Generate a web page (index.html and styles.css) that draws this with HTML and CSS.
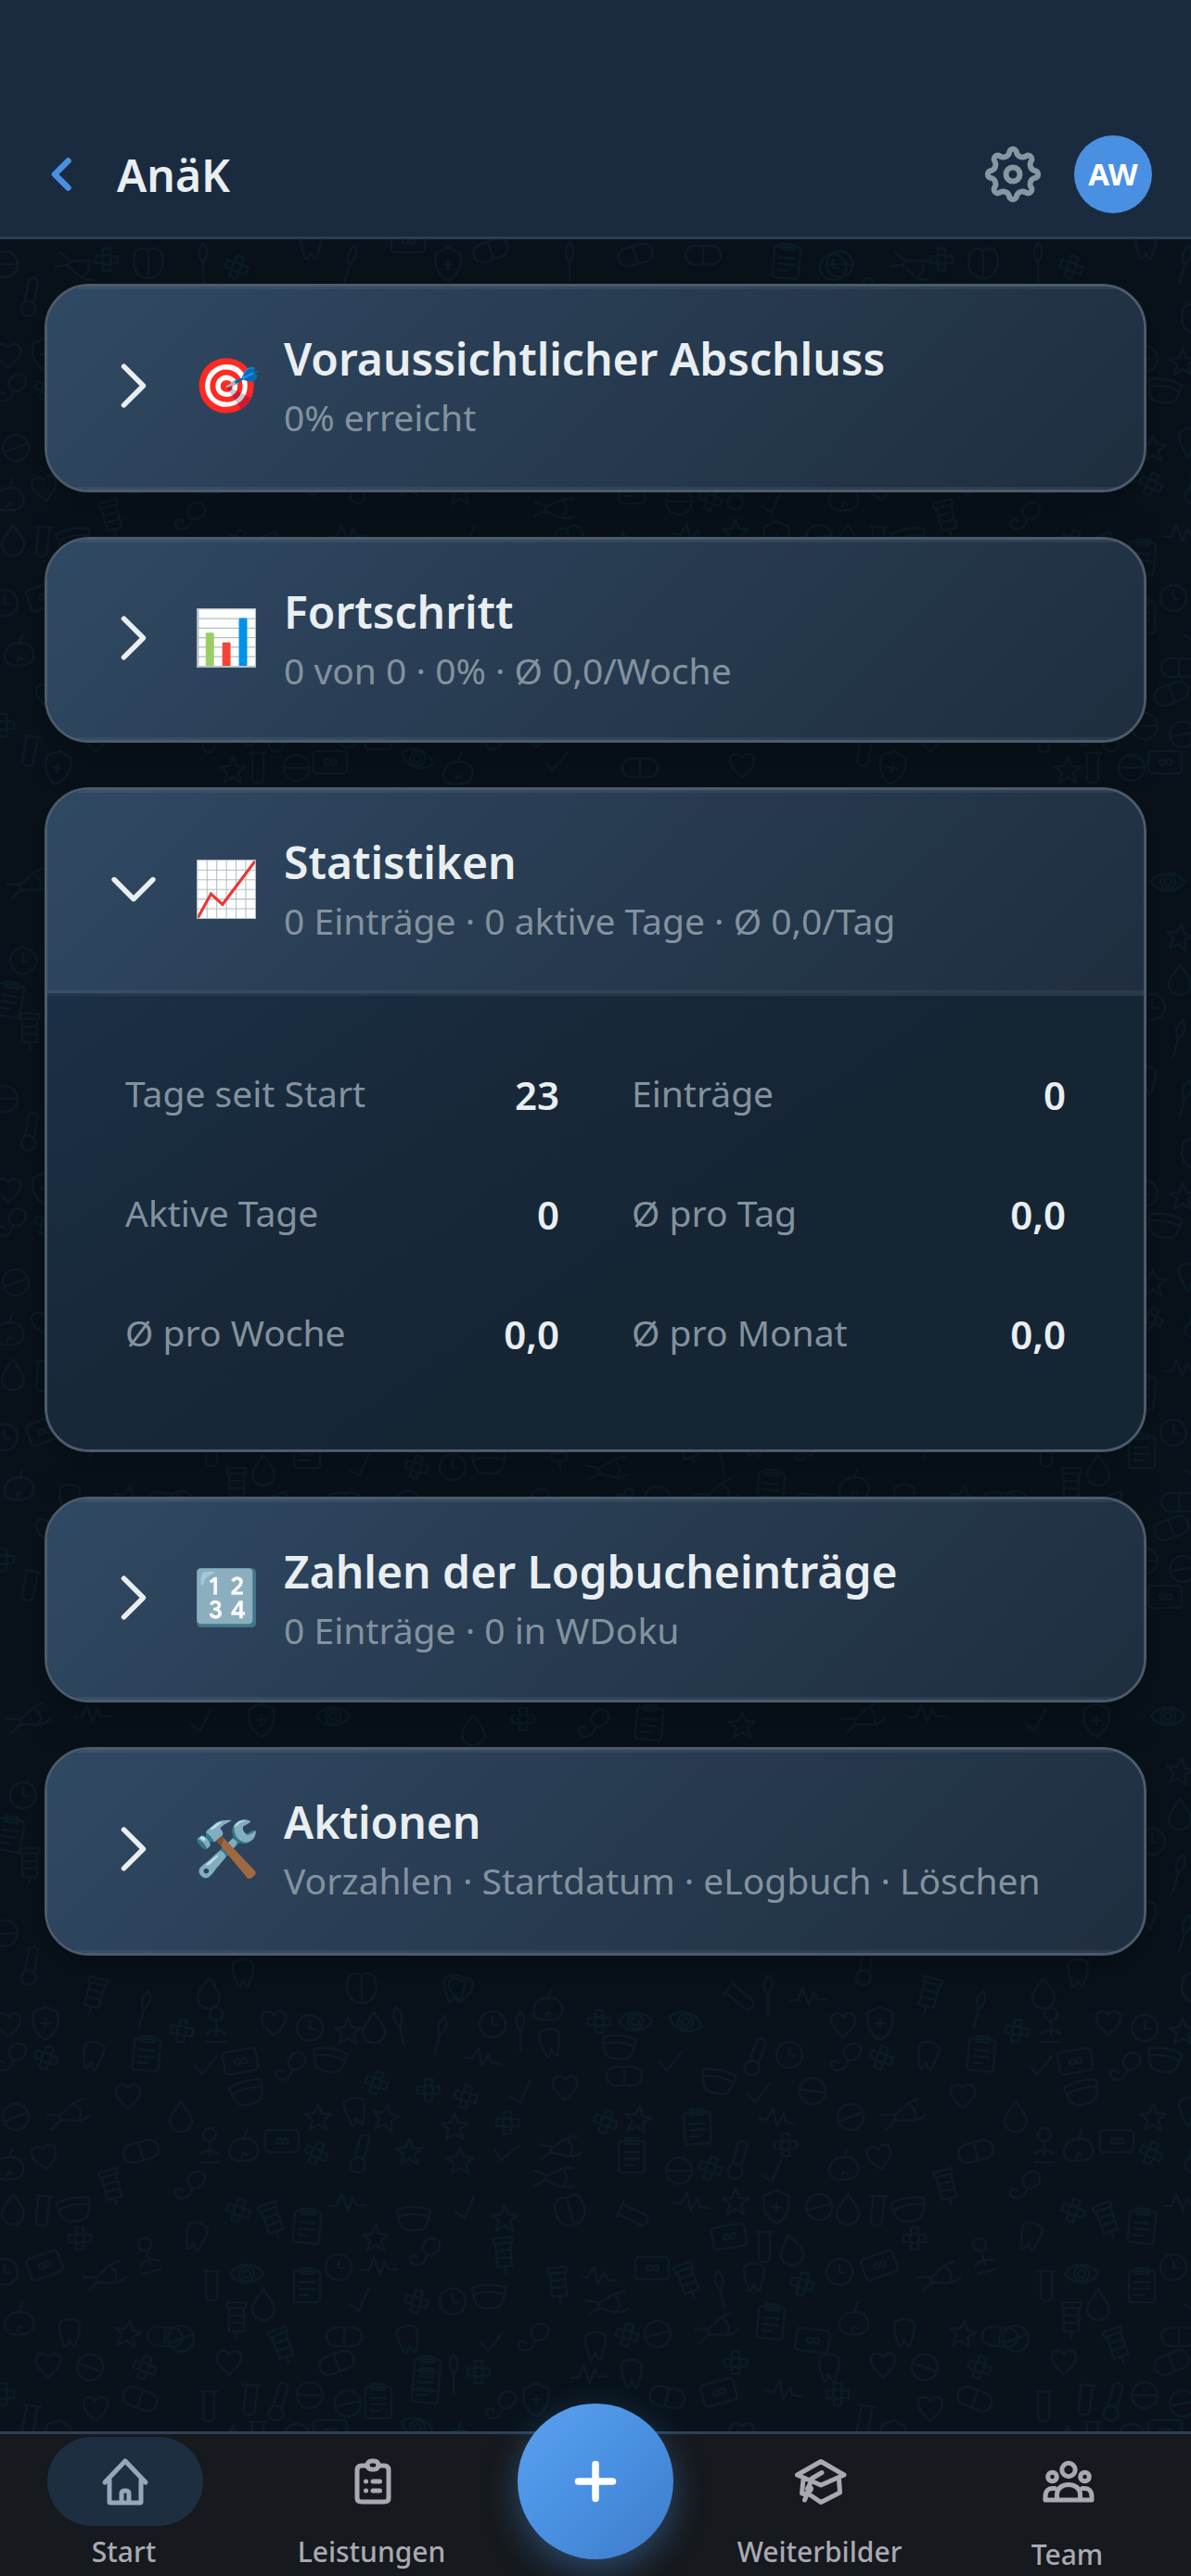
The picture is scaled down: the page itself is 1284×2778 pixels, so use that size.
FILE: index.html
```html
<!doctype html>
<html lang="de">

<head>
  <meta charset="UTF-8" />
  <meta name="viewport" content="width=device-width, initial-scale=1.0" />
  <title>AnäK</title>
  <link rel="stylesheet" href="styles.css">
</head>

<body>
  <div id="app" class="app">
    <svg class="backdrop" width="1284" height="2778" aria-hidden="true">
      <defs>
        <g id="heart"><path d="M0 14C-5 8-14 3-13-6c1-7 9-8 13-2 4-6 12-5 13 2 1 9-8 14-13 20z" /></g>
        <g id="shield"><path d="M0-18l13 6c2 12 0 22-13 30-13-8-15-18-13-30zM0-5V5M-5 0H5" /></g>
        <g id="drop"><path d="M0-16C6-7 12-1 12 5a12 12 0 0 1-24 0c0-6 6-12 12-21z" /></g>
        <g id="clock"><circle r="14" /><path d="M0-8V1H6" /></g>
        <g id="circle"><circle r="14" /><path d="M-13 0H13" /></g>
        <g id="star"><path d="M0-14l4 10 10 1-8 6 3 11-9-6-9 6 3-11-8-6 10-1z" /></g>
        <g id="scalpel"><path d="M0-21c7 9 4 15 1 20h-2c-4-6-5-11 1-20zM0 0v21" /></g>
        <g id="cross"><path d="M-4-12h8v8h8v8H4v8h-8V4h-8v-8h8z" /><circle r="5" /></g>
        <g id="tooth"><path d="M-10-12c6-4 14-4 20 0 3 8-2 18-4 26-3 2-4-3-6-7-2 4-3 9-6 7-2-8-7-18-4-26z" /></g>
        <g id="clip"><rect x="-14" y="-16" width="28" height="34" rx="3" /><path d="M-7-19H7v6H-7zM-8-4H8M-8 3H8M-8 10H2" /></g>
        <g id="kit"><rect x="-18" y="-12" width="36" height="24" rx="4" /><circle cx="-3" r="3" /><circle cx="4" r="3" /></g>
        <g id="mask"><path d="M-18-10c12-4 24-4 36 0-1 11-3 18-8 21-7 2-13 2-20 0-5-3-7-10-8-21zM-15-3c10-3 20-3 30 0" /></g>
        <g id="pill"><rect x="-19" y="-10" width="38" height="20" rx="10" /><path d="M0-10V10" /></g>
        <g id="syringe"><path d="M-10-17h20v6H-10zM-8-11V14H8V-11M-8-3H8M-8 5H8M0 14v8" /></g>
        <g id="tube"><path d="M-9-16H9M-6-16V11c0 7 12 7 12 0V-16" /></g>
        <g id="thermo"><path d="M-5 6V-16c0-6 10-6 10 0V6" /><circle cy="13" r="8" /></g>
        <g id="eye"><path d="M-18 0c9-13 27-13 36 0-9 13-27 13-36 0z" /><circle r="8" /><circle r="4" /></g>
        <g id="ecg"><path d="M-20 4h8l5-13 7 18 5-14 4 8h10" /></g>
        <g id="check"><path d="M-12 2l8 9L12-9" /></g>
        <g id="bone"><path d="M-24-8l14 5C0-7 6-12 18-11M-24 8l12-6C0 7 8 13 19 8M-10-3c-3 3-3 6-1 7M8-7c4 5 4 9 0 14" /></g>
        <g id="steth"><path d="M0-12c6-8 18-4 16 5-1 6-9 11-14 8-5-3-6-9-2-13zM2 1c0 12-16 16-18 6-1-5 7-6 8-2" /></g>
        <g id="scope"><circle cy="-15" r="7" /><path d="M0-8V8M-10 6c5-5 13-5 20 0M-10 15h20" /></g>
        <g id="stomach"><path d="M0-8c9-3 17 6 15 15-2 7-9 9-15 8-8 2-16-2-16-9 0-9 8-16 16-14zM0-8l3-10M-2 12c0-5 2-7 5-3" /></g>
        <g id="brain"><path d="M0-15c8-5 16 1 15 8 3 10-3 22-15 22s-18-12-15-22c-1-7 7-13 15-8zM0-15V15" /></g>
      </defs>
      <g id="doodles" class="doodles"></g>
    </svg>

    <header class="topbar">
      <svg class="back" viewBox="0 0 30 48"><path d="M23.500 9.500L9 24l14.500 14.500" /></svg>
      <h1 class="page-title">AnäK</h1>
      <svg class="gear" viewBox="-12 -12 24 24">
        <path d="M-1.350-7.700A1.350 1.350 0 0 1 1.350-7.700A2.300 2.300 0 0 0 4.490-6.400A1.350 1.350 0 0 1 6.400-4.490A2.300 2.300 0 0 0 7.700-1.350A1.350 1.350 0 0 1 7.700 1.350A2.300 2.300 0 0 0 6.400 4.490A1.350 1.350 0 0 1 4.490 6.400A2.300 2.300 0 0 0 1.350 7.700A1.350 1.350 0 0 1-1.350 7.700A2.300 2.300 0 0 0-4.490 6.400A1.350 1.350 0 0 1-6.400 4.490A2.300 2.300 0 0 0-7.700 1.350A1.350 1.350 0 0 1-7.700-1.350A2.300 2.300 0 0 0-6.400-4.490A1.350 1.350 0 0 1-4.490-6.400A2.300 2.300 0 0 0-1.350-7.700z" />
        <circle r="2.500" />
      </svg>
      <div class="avatar">AW</div>
    </header>

    <main class="content">
      <section class="card">
        <div class="card-header tall">
          <svg class="chevron" viewBox="0 0 24 24"><path d="M8.2 4.4l7.6 7.6-7.6 7.6" /></svg>
          <span class="emoji">🎯</span>
          <div class="card-text">
            <h2>Voraussichtlicher Abschluss</h2>
            <p>0% erreicht</p>
          </div>
        </div>
      </section>

      <section class="card">
        <div class="card-header">
          <svg class="chevron" viewBox="0 0 24 24"><path d="M8.2 4.4l7.6 7.6-7.6 7.6" /></svg>
          <span class="emoji">📊</span>
          <div class="card-text">
            <h2>Fortschritt</h2>
            <p>0 von 0 · 0% · Ø 0,0/Woche</p>
          </div>
        </div>
      </section>

      <section class="card">
        <div class="card-header open">
          <svg class="chevron" viewBox="0 0 24 24"><path d="M4.4 8.2l7.6 7.6 7.6-7.6" /></svg>
          <span class="emoji">📈</span>
          <div class="card-text">
            <h2>Statistiken</h2>
            <p>0 Einträge · 0 aktive Tage · Ø 0,0/Tag</p>
          </div>
        </div>
        <div class="stats">
          <div class="stat"><span>Tage seit Start</span><strong>23</strong></div>
          <div class="stat"><span>Einträge</span><strong>0</strong></div>
          <div class="stat"><span>Aktive Tage</span><strong>0</strong></div>
          <div class="stat"><span>Ø pro Tag</span><strong>0,0</strong></div>
          <div class="stat"><span>Ø pro Woche</span><strong>0,0</strong></div>
          <div class="stat"><span>Ø pro Monat</span><strong>0,0</strong></div>
        </div>
      </section>

      <section class="card">
        <div class="card-header">
          <svg class="chevron" viewBox="0 0 24 24"><path d="M8.2 4.4l7.6 7.6-7.6 7.6" /></svg>
          <span class="emoji">🔢</span>
          <div class="card-text">
            <h2>Zahlen der Logbucheinträge</h2>
            <p>0 Einträge · 0 in WDoku</p>
          </div>
        </div>
      </section>

      <section class="card">
        <div class="card-header tall">
          <svg class="chevron" viewBox="0 0 24 24"><path d="M8.2 4.4l7.6 7.6-7.6 7.6" /></svg>
          <span class="emoji">🛠️</span>
          <div class="card-text">
            <h2>Aktionen</h2>
            <p>Vorzahlen · Startdatum · eLogbuch · Löschen</p>
          </div>
        </div>
      </section>
    </main>

    <nav class="tabbar">
      <a class="tab active">
        <span class="tab-icon">
          <svg viewBox="0 0 60 60"><path d="M8 31L30 8l22 23M13 28v24q0 1 1 1h32q1 0 1-1V28M26 53V43q0-3 4-3t4 3v10" /></svg>
        </span>
        <span class="tab-label">Start</span>
      </a>
      <a class="tab">
        <span class="tab-icon">
          <svg viewBox="0 0 60 60"><path d="M24 13h-6q-5 0-5 5v30q0 4 5 4h24q5 0 5-4V18q0-5-5-5h-6" /><rect x="24" y="8" width="12" height="9" rx="4.5" /><path d="M22.500 30h.1M30 30h7.500M22.500 40h.1M30 40h7.500" /></svg>
        </span>
        <span class="tab-label">Leistungen</span>
      </a>
      <div class="tab">
        <div class="fab">
          <svg viewBox="0 0 60 60"><path d="M30 11.500v37M11.500 30h37" /></svg>
        </div>
      </div>
      <a class="tab">
        <span class="tab-icon">
          <svg viewBox="0 0 60 60"><path d="M30 8.500L55 23 30 34 4.500 23zM11 28l-1.500 15L14 44M49.500 28l1 14L30 52.500 19 45M31 20.500L20 27l-3.500 10M18 36l-3 8-2.500 6" /><circle cx="17.500" cy="38" r="2" /></svg>
        </span>
        <span class="tab-label">Weiterbilder</span>
      </a>
      <a class="tab team">
        <span class="tab-icon">
          <svg viewBox="0 0 60 60"><circle cx="30" cy="17.500" r="7.200" /><circle cx="12.500" cy="25" r="4.800" /><circle cx="47.500" cy="25" r="4.800" /><path d="M17.500 50V44c0-14 25-14 25 0v6M15 37.500q-10-1-10 9V50h50v-3.500q0-10-10-9" /></svg>
        </span>
        <span class="tab-label">Team</span>
      </a>
    </nav>
  </div>
  <script src="doodles.js"></script>
</body>

</html>
```
FILE: styles.css
```css
* {
  margin: 0;
  padding: 0;
  box-sizing: border-box;
}

body {
  background: #09121a;
  color: #e9eef1;
  font-family: "Noto Sans", "Open Sans", sans-serif;
}

svg {
  display: block;
  flex: none;
  fill: none;
  stroke: currentColor;
  stroke-linecap: round;
  stroke-linejoin: round;
}

.app {
  position: relative;
  display: flex;
  flex-direction: column;
  width: 1284px;
  height: 2778px;
  overflow: hidden;
}

.backdrop {
  position: absolute;
  top: 0;
  left: 0;
}

.doodles {
  stroke: #0c1b25;
  stroke-width: 2.6;
}

/* top bar */
.topbar {
  position: relative;
  display: flex;
  align-items: center;
  height: 258px;
  padding: 120px 42px 0 50px;
  background: #1a2b40;
  border-bottom: 3px solid #2c3e53;
}

.back {
  width: 30px;
  height: 48px;
  color: #4a90e2;
  stroke-width: 6.5;
}

.page-title {
  flex: 1;
  margin-left: 46px;
  padding-top: 2px;
  font-size: 48px;
  font-weight: 600;
  line-height: 60px;
}

.gear {
  width: 72px;
  height: 72px;
  margin-right: 30px;
  color: #8796a1;
  stroke-width: 2;
}

.avatar {
  width: 84px;
  height: 84px;
  border-radius: 50%;
  background: #4a90e2;
  color: #fff;
  font-size: 33px;
  font-weight: 700;
  line-height: 84px;
  text-align: center;
}

/* cards */
.content {
  position: relative;
  flex: 1;
  display: flex;
  flex-direction: column;
  gap: 48px;
  padding: 48px;
}

.card {
  border: 3px solid #4b5b6c;
  border-radius: 48px;
  overflow: hidden;
  background: #1a2a3b;
  box-shadow: 0 12px 48px rgba(0, 0, 0, 0.25);
}

.card-header {
  display: flex;
  align-items: center;
  height: 216px;
  padding: 0 48px 5px 60px;
  background: linear-gradient(135deg, #304963 0%, #283c52 45%, #1f2e3f 100%);
  box-shadow: inset 0 3px 0 rgba(255, 255, 255, 0.06), inset 0 -3px 0 rgba(255, 255, 255, 0.06);
}

.card-header.tall {
  height: 219px;
}

.card-header.open {
  height: 222px;
  border-bottom: 3px solid #26384b;
}

.chevron {
  width: 66px;
  height: 66px;
  stroke-width: 2;
}

.emoji {
  width: 84px;
  margin-left: 25px;
  font-family: "Noto Color Emoji", sans-serif;
  font-size: 58px;
  line-height: 66px;
  text-align: center;
  white-space: nowrap;
}

.card-text {
  align-self: flex-start;
  margin-left: 20px;
  padding-top: 48px;
}

.card-text h2 {
  font-size: 48px;
  font-weight: 600;
  line-height: 59px;
}

.card-text p {
  margin-top: 4px;
  color: #83929e;
  font-size: 39px;
  line-height: 60px;
}

.stats {
  display: grid;
  grid-template-columns: 1fr 1fr;
  gap: 6px;
  height: 489px;
  padding: 43px 48px 65px;
  background: linear-gradient(145deg, #1b2f46 0%, #182839 35%, #162534 60%);
}

.stat {
  display: flex;
  align-items: center;
  justify-content: space-between;
  padding: 0 36px;
}

.stat span {
  color: #83929e;
  font-size: 39px;
}

.stat strong {
  padding-top: 4px;
  font-size: 42px;
  font-weight: 600;
}

/* bottom navigation */
.tabbar {
  position: relative;
  display: grid;
  grid-template-columns: 267px 267px 216px 267px 267px;
  height: 156px;
  padding-top: 3px;
  background: #16191d;
  border-top: 3px solid #2f4056;
}

.tab {
  display: flex;
  flex-direction: column;
  align-items: center;
  color: #a9a9b4;
}

.tab-icon {
  display: flex;
  align-items: center;
  justify-content: center;
  width: 168px;
  height: 96px;
  margin-left: 3px;
  border-radius: 48px;
}

.active .tab-icon {
  background: #1d2e41;
  color: #98a6bd;
}

.tab-icon svg {
  width: 60px;
  height: 60px;
  stroke-width: 5;
}

.tab-label {
  margin-top: 8px;
  font-size: 30px;
  font-weight: 500;
  line-height: 40px;
}

.team .tab-label {
  margin-top: 11px;
}

.fab {
  flex: none;
  display: flex;
  align-items: center;
  justify-content: center;
  width: 168px;
  height: 168px;
  margin-top: -36px;
  border-radius: 50%;
  background: linear-gradient(135deg, #5ba1ef 0%, #4a90e2 50%, #3d7cc9 100%);
  box-shadow: 0 12px 36px rgba(74, 144, 226, 0.4);
  color: #fff;
}

.fab svg {
  width: 60px;
  height: 60px;
  stroke-width: 7.5;
}
```
FILE: doodles.js
```js
// one 900x900 tile of medical doodles: name x y rotation
const tile = `
shield 62 8 10;star 251 10;tube 278 8;circle 320 8;kit 356 2;eye 450 -2 20;stomach 494 10;check 600 0;pill 690 8;heart 800 5
check 217 135 -10;shield 282 135;eye 359 131;cross 564 134;drop 510 145;ecg 100 128;bone 33 133 -20;clip 700 138 5;star 800 140;steth 640 140
clock 25 216;clip 10 258 10;syringe 32 290;clock 342 266;drop 372 236;scalpel 370 300 15;star 372 190 10
circle 5 365;bone 85 368 20;cross 115 360;brain 160 365;scalpel 219 363;cross 255 368 20;scalpel 377 365 15;shield 483 365;pill 529 350 -20
scalpel 614 362;thermo 33 400 10;pill 685 355 -15;pill 758 355;clip 848 362 5;tooth 335 345;clock 898 368;kit 440 340
drop 225 429;heart 9 463;shield 49 462;syringe 102 430 15;scalpel 155 447 15;cross 196 470 10;scope 233 467;heart 295 461;clock 334 467;star 375 470
drop 403 466;scalpel 431 465 -12;scalpel 474 475 15;tooth 490 425;brain 390 425;tooth 262 408;steth 12 500;cross 50 499 20;tooth 100 497 12
clip 158 495 5;check 222 506;kit 259 503 -10;steth 313 510;mask 355 502 10;cross 406 526 20;cross 462 534;heart 138 540;mask 267 537 -15
circle 17 563 -20;bone 76 560 -20;star 343 563;tooth 383 557 -10;star 416 563 10;star 490 573;drop 195 562;kit 304 589;cross 341 602 25
scope 226 597;stomach 263 595;thermo 389 602 15;star 441 600;heart 48 606 -10;pill 152 600 -15;stomach 10 615;syringe 120 637 -15;steth 205 638
drop 14 662;tube 46 664 5;mask 80 663 -10;cross 257 664 20;syringe 293 673 -20;clip 331 681 5;ecg 375 655;mask 446 673;star 405 693
tooth 211 692 15;cross 86 694;steth 458 710;kit 48 723 -20;scope 160 715 -15;bone 115 735 -20;clock 5 730;eye 266 732;tube 228 745
clip 331 745;clock 365 725;ecg 410 724;cross 449 762 15;check 388 760 -15;drop 284 765;clock 488 762;stomach 21 782;syringe 255 780
tooth 75 796;star 138 796 10;pill 178 800 5;circle 195 802 -20;syringe 304 808 -20;pill 371 800;tooth 440 803 -10;heart 52 830;circle 97 833 20
cross 156 833 20;heart 247 827;pill 363 828 -20;clip 460 840 5;scalpel 489 840;heart 497 425;stomach 591 443;clock 531 463;scalpel 561 470
tooth 593 483 -10;ecg 521 499 12;cross 646 460;eye 685 460;eye 739 460 15;mask 667 488 5;pill 673 519;check 723 502;heart 609 531
check 562 536 -15;cross 502 541 15;cross 547 569;cross 653 568 20;star 688 565 10;tube 798 434 -50;scalpel 828 431;ecg 872 433;thermo 815 498 20
clock 851 496;mask 774 525 12;check 818 536;circle 876 535 8;clip 752 574 -3;ecg 839 564 10;cross 847 593;thermo 796 609 15;check 833 621 -15
circle 732 621;cross 766 618 20;clip 681 605;bone 606 597 -8;bone 600 629;check 546 600 12;star 496 610;check 502 660 -15;star 544 672
brain 615 665 -15;tube 683 669 -65;ecg 746 655 10;star 793 654;shield 837 660;circle 883 660 -15;kit 786 692 -10;tube 824 703;drop 853 706 -12
syringe 543 710 -5;kit 703 726;syringe 741 738 -20;scalpel 777 749 -10;tooth 813 736;cross 865 743 15;ecg 646 734 10;syringe 602 742 -5
mask 527 757;bone 657 765 -8;clip 831 784 5;bone 775 791 -20;kit 876 804 8;steth 575 802;check 530 804;tooth 642 810;cross 676 798 15
circle 709 797 -15;cross 793 828;tooth 894 834;cross 516 838;ecg 636 840;tooth 681 840;pill 719 865 12;kit 775 860 -15;ecg 846 858 12
steth 540 875;shield 578 868;heart 103 877;pill 151 867 20;tube 225 875;tube 270 868 5;thermo 301 870 15;circle 334 863;circle 375 872 -10
clip 408 870;clip 459 853 5;tube 32 890 10;cross 3 862
`.trim().split(/[;\n]/).map((item) => item.split(' '));

let markup = '';
for (let ty = -80; ty < 2778; ty += 900) {
  for (let tx = 0; tx < 1284; tx += 900) {
    for (const [name, x, y, angle = 0] of tile) {
      markup += `<use href="#${name}" transform="translate(${tx + +x} ${ty + +y}) rotate(${angle})"/>`;
    }
  }
}
document.getElementById('doodles').innerHTML = markup;
```
